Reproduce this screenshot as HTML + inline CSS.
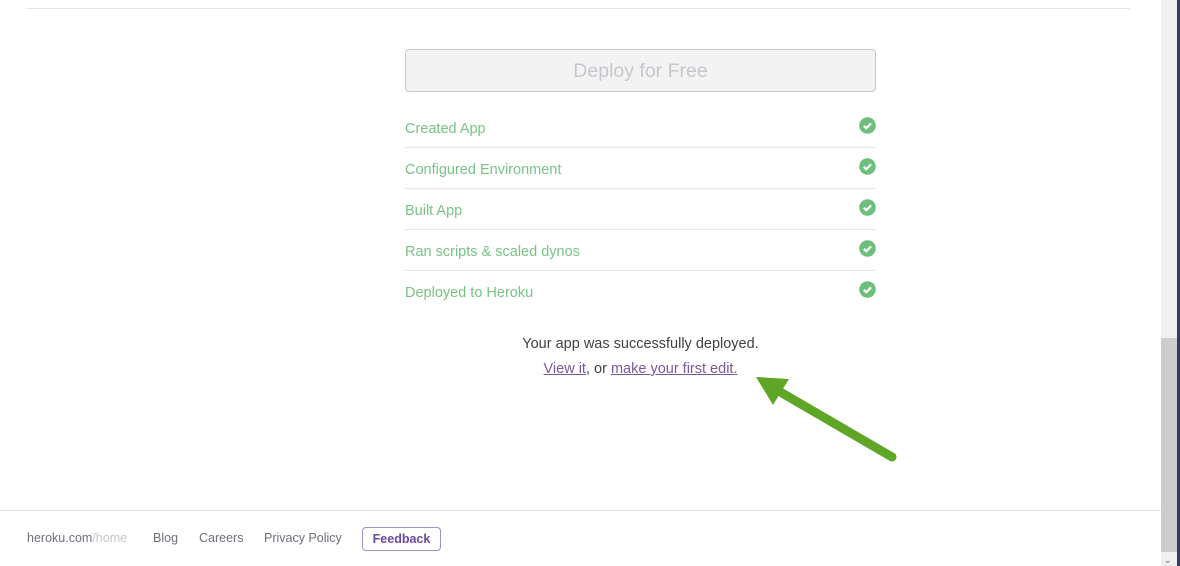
<!DOCTYPE html>
<html><head><style>
*{margin:0;padding:0;box-sizing:border-box}
body{width:1180px;height:566px;position:relative;background:#fff;font-family:"Liberation Sans",sans-serif;overflow:hidden}
.abs{position:absolute}
.btn{left:405px;top:49px;width:471px;height:43px;border:1px solid #c8c8cc;border-radius:4px;background:#f3f3f3;color:#c6c6ce;font-size:19.5px;text-align:center;line-height:42px}
.row{left:405px;width:471px;height:41px;font-size:14.5px;color:#79c284;line-height:41px;padding-top:2px}
.row.b{border-bottom:1px solid #e6e6e6}
.row svg{position:absolute;right:0;top:10px}
.msg{left:405px;width:471px;text-align:center;font-size:14.5px;color:#3f3f44}
.msg a{color:#79589f;text-decoration:underline}
.foot{top:531px;font-size:12.5px;color:#6f6f7a}
</style></head><body>
<div class="abs" style="left:27px;top:8px;width:1103px;height:1px;background:#e4e4e4"></div>
<div class="abs btn">Deploy for Free</div>
<div class="abs row b" style="top:107px">Created App<svg width="17" height="17"><circle cx="8.5" cy="8.5" r="8.3" fill="#6cc07b"/><path d="M4.8 8.8l2.5 2.4 4.8-4.8" stroke="#fff" stroke-width="2.2" fill="none"/></svg></div>
<div class="abs row b" style="top:148px">Configured Environment<svg width="17" height="17"><circle cx="8.5" cy="8.5" r="8.3" fill="#6cc07b"/><path d="M4.8 8.8l2.5 2.4 4.8-4.8" stroke="#fff" stroke-width="2.2" fill="none"/></svg></div>
<div class="abs row b" style="top:189px">Built App<svg width="17" height="17"><circle cx="8.5" cy="8.5" r="8.3" fill="#6cc07b"/><path d="M4.8 8.8l2.5 2.4 4.8-4.8" stroke="#fff" stroke-width="2.2" fill="none"/></svg></div>
<div class="abs row b" style="top:230px">Ran scripts &amp; scaled dynos<svg width="17" height="17"><circle cx="8.5" cy="8.5" r="8.3" fill="#6cc07b"/><path d="M4.8 8.8l2.5 2.4 4.8-4.8" stroke="#fff" stroke-width="2.2" fill="none"/></svg></div>
<div class="abs row" style="top:271px">Deployed to Heroku<svg width="17" height="17"><circle cx="8.5" cy="8.5" r="8.3" fill="#6cc07b"/><path d="M4.8 8.8l2.5 2.4 4.8-4.8" stroke="#fff" stroke-width="2.2" fill="none"/></svg></div>
<div class="abs msg" style="top:336px">Your app was successfully deployed.</div>
<div class="abs msg" style="top:361px"><a>View it</a>, or <a>make your first edit.</a></div>
<svg class="abs" style="left:0;top:0" width="1180" height="566">
<line x1="782" y1="393" x2="892" y2="457" stroke="#5fa526" stroke-width="9" stroke-linecap="round"/>
<polygon points="756,377 789,379 773,405" fill="#5fa526"/>
</svg>
<div class="abs" style="left:0;top:510px;width:1161px;height:1px;background:#e4e4e4"></div>
<div class="abs foot" style="left:27px">heroku.com<span style="color:#c4c4cc">/home</span></div>
<div class="abs foot" style="left:153px">Blog</div>
<div class="abs foot" style="left:199px">Careers</div>
<div class="abs foot" style="left:264px">Privacy Policy</div>
<div class="abs" style="left:362px;top:527px;width:79px;height:24px;border:1px solid #a58fc9;border-radius:4px;color:#6b4a9e;font-size:12.5px;font-weight:bold;text-align:center;line-height:22px">Feedback</div>
<div class="abs" style="left:1161px;top:0;width:16px;height:566px;background:#f0f0f0"></div>
<div class="abs" style="left:1161px;top:338px;width:16px;height:214px;background:#cdcdcd"></div>
<div class="abs" style="left:1164px;top:555px;font-size:9px;color:#666">&#8964;</div>
<div class="abs" style="left:1177px;top:0;width:3px;height:566px;background:#38386e"></div>
</body></html>
